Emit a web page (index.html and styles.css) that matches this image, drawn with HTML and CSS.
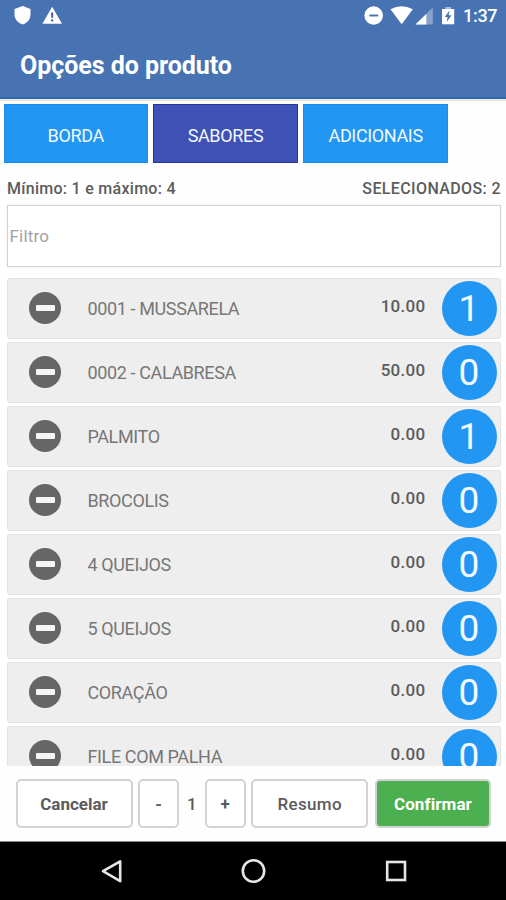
FILE: index.html
```html
<!DOCTYPE html>
<html lang="pt-BR">
<head>
<meta charset="utf-8">
<title>Opções do produto</title>
<link rel="stylesheet" href="styles.css">
</head>
<body>
<header class="appbar">
  <div class="status">
    <svg class="status-left" width="70" height="30" viewBox="0 0 70 30"><path d="M22.700 6L30.500 9V14.500C30.500 19 27.500 23 22.700 24.500C17.800 23 14.500 19 14.500 14.500V9Z" fill="#fff"/><path d="M52.200 6.800L62 23.700H42.400Z" fill="#fff"/><path d="M52.200 12.500V17.800M52.200 19.200V21.400" stroke="#3c5c91" stroke-width="1.900"/></svg>
    <svg class="status-right" width="100" height="30" viewBox="360 0 100 30"><circle cx="373.700" cy="15.500" r="9.300" fill="#fff"/><path d="M369.300 15.500H378.200" stroke="#4672b2" stroke-width="1.900"/><path d="M390.500 9.300Q401.500 3.300 412.800 9.300L401.700 24.200Z" fill="#fff"/><path d="M432.800 7.500V24.500H415.500Z" fill="#88a3cd"/><path d="M426.300 14V24.500H415.500Z" fill="#fff"/><path d="M442 9H454.200V24.300H442Z" fill="#fff"/><path d="M445.200 7H451V9H445.200Z" fill="#a9bddb"/><path d="M449.500 10.500L444.800 17H447.600L446.700 22L451.500 15.300H448.700Z" fill="#4672b2"/></svg>
    <span class="clock">1:37</span>
  </div>
  <h1>Opções do produto</h1>
</header>
<main>
  <nav class="tabs">
    <button class="tab">BORDA</button>
    <button class="tab active">SABORES</button>
    <button class="tab">ADICIONAIS</button>
  </nav>
  <div class="summary"><span class="limits">Mínimo: 1 e máximo: 4</span><span class="selected">SELECIONADOS: 2</span></div>
  <input class="filter" type="text" placeholder="Filtro">
  <ul class="items">
    <li><i class="minus"></i><span class="name">0001 - MUSSARELA</span><span class="price">10.00</span><b class="qty">1</b></li>
    <li><i class="minus"></i><span class="name">0002 - CALABRESA</span><span class="price">50.00</span><b class="qty">0</b></li>
    <li><i class="minus"></i><span class="name">PALMITO</span><span class="price">0.00</span><b class="qty">1</b></li>
    <li><i class="minus"></i><span class="name">BROCOLIS</span><span class="price">0.00</span><b class="qty">0</b></li>
    <li><i class="minus"></i><span class="name">4 QUEIJOS</span><span class="price">0.00</span><b class="qty">0</b></li>
    <li><i class="minus"></i><span class="name">5 QUEIJOS</span><span class="price">0.00</span><b class="qty">0</b></li>
    <li><i class="minus"></i><span class="name">CORAÇÃO</span><span class="price">0.00</span><b class="qty">0</b></li>
    <li><i class="minus"></i><span class="name">FILE COM PALHA</span><span class="price">0.00</span><b class="qty">0</b></li>
  </ul>
</main>
<footer class="actions">
  <button class="btn wide">Cancelar</button>
  <button class="btn small">-</button>
  <span class="count">1</span>
  <button class="btn small">+</button>
  <button class="btn wide resumo">Resumo</button>
  <button class="btn confirm">Confirmar</button>
</footer>
<div class="system">
  <svg width="506" height="58" viewBox="0 842 506 58" fill="none" stroke="#e6e6e6" stroke-width="2.600"><path d="M120.200 861.300V881.200L103 871.200Z" stroke-linejoin="round"/><circle cx="253.500" cy="871" r="10.700"/><rect x="387.200" y="862" width="17.800" height="18"/></svg>
</div>
</body>
</html>
```
FILE: styles.css
```css
* { box-sizing: border-box; }
body { margin: 0; width: 506px; height: 900px; overflow: hidden; display: flex; flex-direction: column; background: #fefefe; font-family: Roboto, sans-serif; color: #5c5c5c; }
button { font-family: inherit; padding: 0; }
.appbar { flex: none; height: 99px; background: #4873b3; border-bottom: 2px solid #2d68ae; color: #fff; }
.status { height: 32px; display: flex; }
.status-right { margin-left: 290px; }
.clock { padding-left: 3px; font-size: 18px; font-weight: 500; line-height: 32px; letter-spacing: -0.3px; }
h1 { margin: 18px 0 0 20px; font-size: 25px; line-height: 32px; font-weight: 700; white-space: nowrap; letter-spacing: -0.05px; }
main { flex: none; height: 667px; overflow: hidden; border-top: 2px solid #ebe9e5; }
.tabs { display: flex; gap: 5.700px; padding: 3px 0 0 3.500px; }
.tab { width: 144.500px; height: 58.500px; padding-top: 5px; border: 1px solid #198bea; background: #2196f3; color: #f2f8ff; font-size: 18px; letter-spacing: -0.35px; }
.tab.active { background: #3f51b5; border-color: #2636a2; margin-left: -0.500px; }
.summary { height: 42px; display: flex; justify-content: space-between; align-items: center; padding: 9px 5px 0 7px; font-size: 16px; font-weight: 500; }
.limits { letter-spacing: .28px; }
.selected { letter-spacing: .38px; }
.filter { display: block; width: 494px; height: 62px; margin: 0 0 0 6.500px; padding: 0 2px; border: 1.500px solid #d3d3d3; box-shadow: 0 0 1px #d3d3d3; background: #fff; font: 400 17px Roboto, sans-serif; letter-spacing: .2px; }
.filter::placeholder { color: #a2a2a2; }
.items { list-style: none; margin: 11px 5px 0 6.500px; padding: 0; display: flex; flex-direction: column; gap: 2.500px; }
.items li { flex: none; height: 61.500px; display: flex; align-items: center; background: #eee; border: 1px solid #e3e3e3; border-radius: 3px; padding: 0 3.500px 0 21.500px; }
.minus { width: 32px; height: 32px; margin-top: -0.500px; border-radius: 50%; background: #666; display: flex; align-items: center; justify-content: center; }
.minus::after { content: ""; width: 19px; height: 6px; border-radius: 1px; background: #f5f5f5; }
.name { margin-left: 26.500px; font-size: 18px; font-weight: 400; letter-spacing: -0.38px; color: #777; padding-top: 1px; }
.price { margin-left: auto; margin-right: 16px; font-size: 17px; font-weight: 500; letter-spacing: .3px; padding-bottom: 4px; }
.qty { width: 55px; height: 55px; border-radius: 50%; background: #2196f3; color: #f4faff; font-size: 37px; font-weight: 400; line-height: 55px; text-align: center; }
.actions { flex: none; height: 76px; display: flex; align-items: center; padding: 0 14px 0 15.500px; gap: 5.700px; border-bottom: 1px solid #888; }
.btn { height: 49px; border: 2px solid #d3d3d3; border-radius: 5px; background: #fff; color: #5c5c5c; font-size: 17px; font-weight: 700; }
.wide { width: 117px; }
.small { width: 41px; }
.count { width: 14px; text-align: center; font-size: 17px; font-weight: 500; }
.resumo { font-weight: 500; letter-spacing: .3px; }
.confirm { width: 116px; margin-left: 1px; background: #4caf50; color: #fff; letter-spacing: .1px; }
.system { flex: none; height: 58px; background: #000; }
svg { display: block; flex: none; }
```
